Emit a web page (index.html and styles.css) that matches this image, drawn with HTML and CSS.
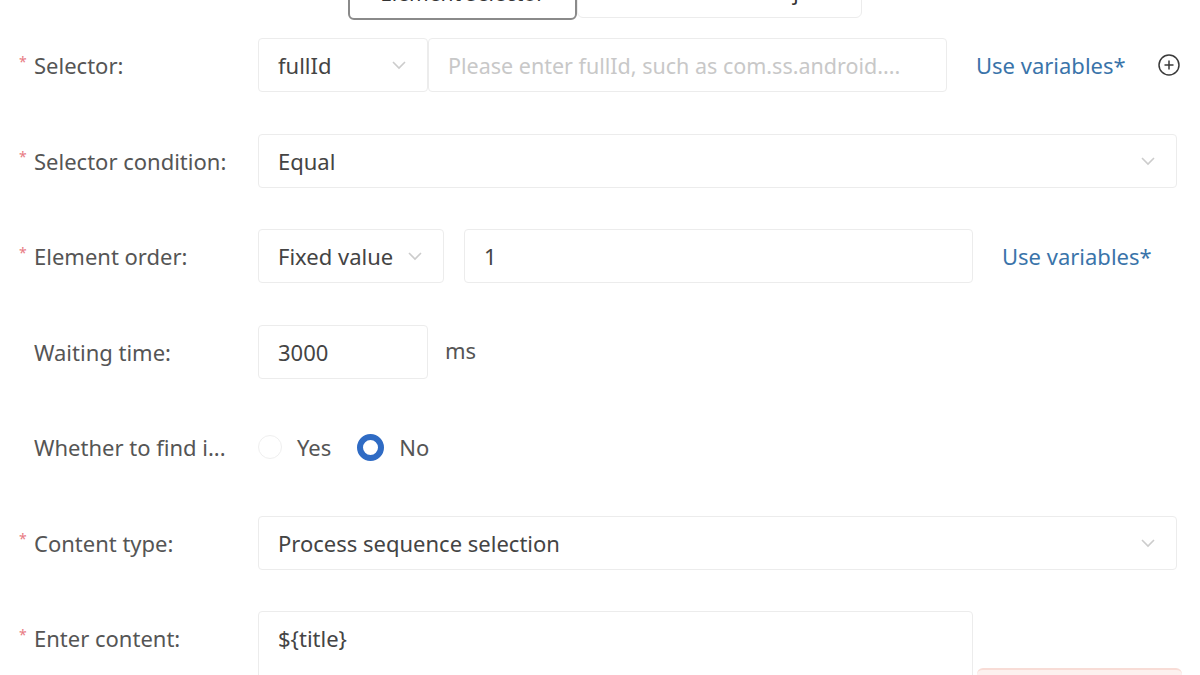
FILE: index.html
```html
<!DOCTYPE html>
<html>
<head>
<meta charset="utf-8">
<link rel="stylesheet" href="styles.css">
</head>
<body>
<div class="page">
  <div class="tabs">
    <div class="tab tab-active">Element selector</div>
    <div class="tab">Stored element object</div>
  </div>

  <div class="form">
    <div class="row">
      <div class="label"><span class="req">*</span>Selector:</div>
      <div class="ctrl">
        <div class="box sel w170"><span>fullId</span><svg class="chev" viewBox="0 0 16 10"><path d="M2 2 L8 8 L14 2" /></svg></div>
        <div class="box inp w519"><span class="ph">Please enter fullId, such as com.ss.android....</span></div>
        <a class="link">Use variables*</a>
        <svg class="plus" viewBox="0 0 24 24"><circle cx="12" cy="12" r="10" /><path d="M12 7.5 V16.5 M7.5 12 H16.5" /></svg>
      </div>
    </div>

    <div class="row">
      <div class="label"><span class="req">*</span>Selector condition:</div>
      <div class="ctrl">
        <div class="box sel full"><span>Equal</span><svg class="chev" viewBox="0 0 16 10"><path d="M2 2 L8 8 L14 2" /></svg></div>
      </div>
    </div>

    <div class="row">
      <div class="label"><span class="req">*</span>Element order:</div>
      <div class="ctrl">
        <div class="box sel w186"><span>Fixed value</span><svg class="chev" viewBox="0 0 16 10"><path d="M2 2 L8 8 L14 2" /></svg></div>
        <div class="box inp w509 g20"><span>1</span></div>
        <a class="link">Use variables*</a>
      </div>
    </div>

    <div class="row">
      <div class="label plain">Waiting time:</div>
      <div class="ctrl">
        <div class="box inp w170"><span>3000</span></div>
        <span class="unit">ms</span>
      </div>
    </div>

    <div class="row">
      <div class="label plain">Whether to find i...</div>
      <div class="ctrl">
        <label class="radio"><span class="dot"></span><span>Yes</span></label>
        <label class="radio on"><span class="dot"></span><span>No</span></label>
      </div>
    </div>

    <div class="row">
      <div class="label"><span class="req">*</span>Content type:</div>
      <div class="ctrl">
        <div class="box sel full"><span>Process sequence selection</span><svg class="chev" viewBox="0 0 16 10"><path d="M2 2 L8 8 L14 2" /></svg></div>
      </div>
    </div>

    <div class="row row-top">
      <div class="label"><span class="req">*</span>Enter content:</div>
      <div class="ctrl ctrl-top">
        <div class="box area w715"><span>${title}</span></div>
        <div class="redbtn"></div>
      </div>
    </div>
  </div>
</div>
</body>
</html>
```

FILE: styles.css
```css
* { box-sizing: border-box; }
html, body { margin: 0; padding: 0; background: #fff; overflow: hidden; }
body {
  font-family: "Noto Sans", "Open Sans", sans-serif;
  font-size: 22px;
  color: #4a4a4a;
  width: 1200px;
  height: 675px;
}
.page { position: relative; height: 675px; overflow: hidden; }

.tabs {
  display: flex;
  margin-left: 348px;
  margin-top: -34px;
  height: 54px;
}
.tab {
  height: 52px;
  display: flex;
  align-items: center;
  justify-content: center;
  border: 1px solid #ececec;
  border-radius: 0 0 6px 6px;
  color: #333;
  font-size: 21px;
  width: 285px;
  white-space: nowrap;
}
.tab-active {
  width: 229px;
  height: 54px;
  border: 2px solid #8a8a8a;
  color: #333;
}

.form {
  padding-left: 17px;
  margin-top: 18px;
  display: flex;
  flex-direction: column;
  gap: 41.5px;
}
.row {
  display: flex;
  align-items: center;
  height: 54px;
}
.row-top { align-items: flex-start; height: 120px; }
.label {
  width: 241px;
  flex: none;
  color: #555;
  white-space: nowrap;
  display: flex;
  align-items: center;
}
.row-top .label { height: 54px; }
.label.plain { padding-left: 17px; }
.req {
  color: #e87a82;
  font-size: 14px;
  width: 17px;
  margin-top: -8px;
  padding-left: 2px;
}
.ctrl { display: flex; align-items: center; }
.ctrl-top { align-items: flex-start; }

.box {
  height: 54px;
  border: 1.5px solid #ececec;
  border-radius: 4px;
  display: flex;
  align-items: center;
  padding: 0 19px;
  color: #444;
  background: #fff;
  flex: none;
  white-space: nowrap;
}
.sel { justify-content: space-between; padding-right: 20px; }
.w170 { width: 170px; }
.w186 { width: 186px; }
.w509 { width: 509px; }
.w519 { width: 519px; }
.w715 { width: 715px; }
.full { width: 919px; }
.g20 { margin-left: 20px; }
.ph { color: #c8c8c8; white-space: nowrap; font-size: 21.5px; }

.chev { width: 16px; height: 10px; fill: none; stroke: #cccccc; stroke-width: 1.6; }

.link { color: #3a74aa; margin-left: 29px; white-space: nowrap; }
.plus { width: 24px; height: 24px; margin-left: 31px; fill: none; stroke: #3a3a3a; stroke-width: 1.5; }

.unit { margin-left: 17px; color: #555; margin-top: -4px; }

.radio { display: flex; align-items: center; margin-right: 26px; color: #555; }
.dot {
  width: 24px; height: 24px; border-radius: 50%;
  border: 1.5px solid #efefef; margin-right: 15px;
}
.radio.on .dot { border: 6px solid #2f6bc4; background: #fff; margin-right: 15px; width: 27px; height: 27px; }

.area {
  align-items: flex-start;
  padding-top: 11px;
  height: 140px;
}
.redbtn {
  width: 205px;
  height: 40px;
  margin-top: 57px;
  margin-left: 4px;
  border-radius: 6px;
  background: #fdf1ef;
  border-top: 2px solid #f8dcd6;
}
```
